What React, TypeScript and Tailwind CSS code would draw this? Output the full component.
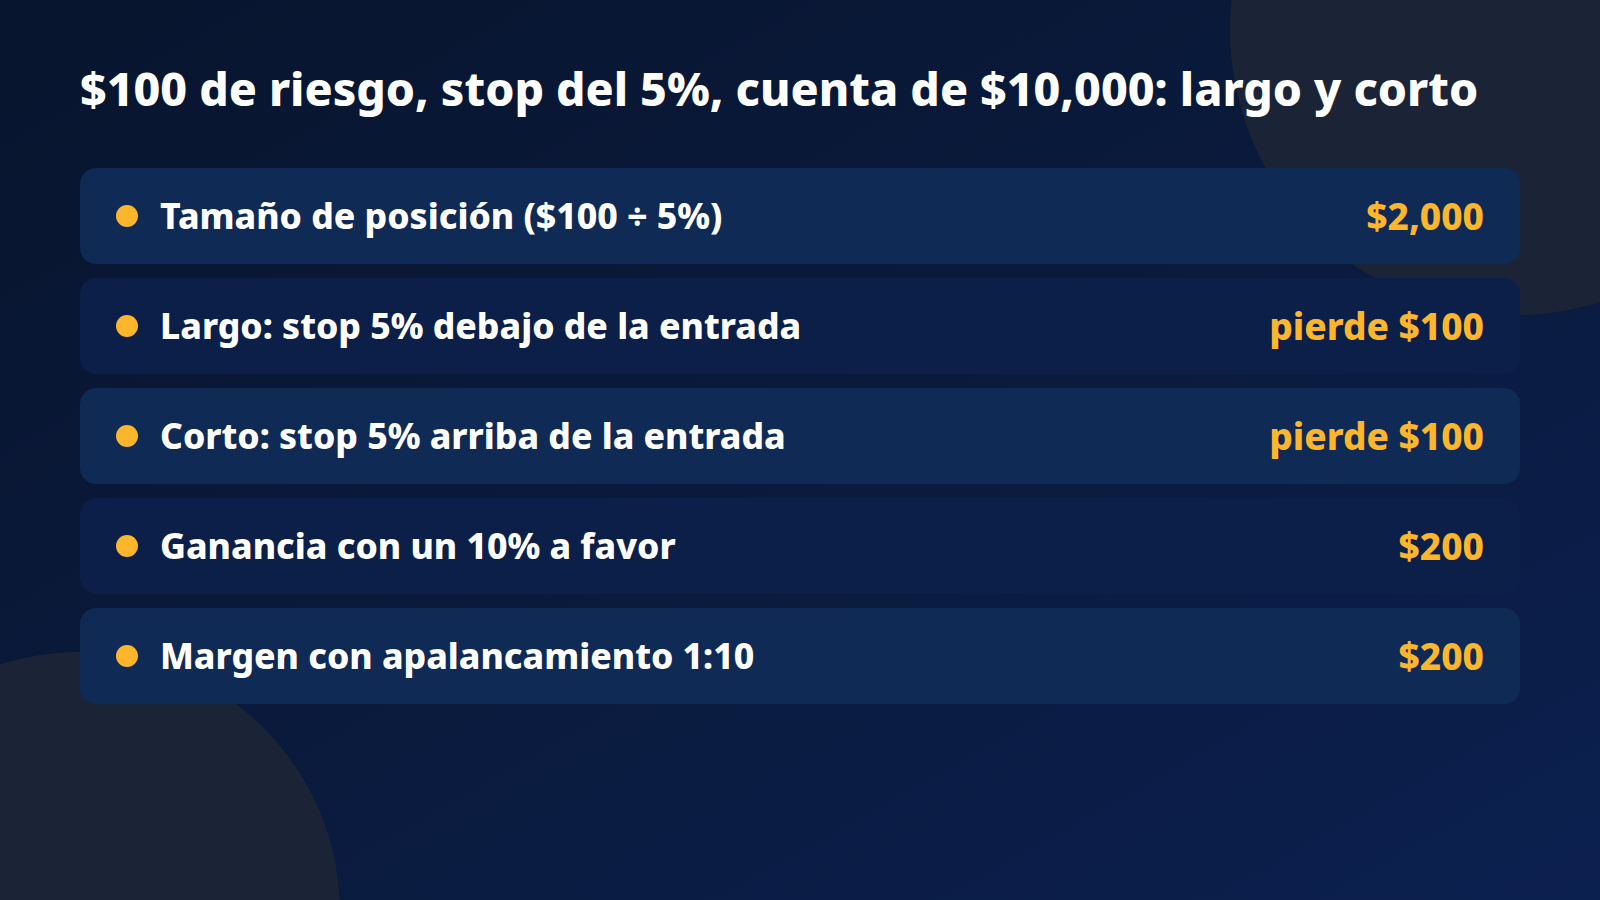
import React from 'react';

type Row = { label: string; value: string };

const rows: Row[] = [
  { label: 'Tamaño de posición ($100 ÷ 5%)', value: '$2,000' },
  { label: 'Largo: stop 5% debajo de la entrada', value: 'pierde $100' },
  { label: 'Corto: stop 5% arriba de la entrada', value: 'pierde $100' },
  { label: 'Ganancia con un 10% a favor', value: '$200' },
  { label: 'Margen con apalancamiento 1:10', value: '$200' },
];

const App: React.FC = () => {
  return (
    <div
      className="relative w-[1600px] h-[900px] overflow-hidden bg-gradient-to-br from-[#08152e] via-[#0a1a3c] to-[#0c2050]"
      style={{ fontFamily: '"Noto Sans", "Open Sans", sans-serif' }}
    >
      {/* decorative circles */}
      <div className="absolute left-[1230px] top-[-255px] w-[570px] h-[570px] rounded-full bg-[#1a2436]" />
      <div className="absolute left-[-180px] top-[652px] w-[520px] h-[520px] rounded-full bg-[#1a2436]" />

      <div className="relative flex flex-col px-20 pt-[58px]">
        <h1 className="text-[46.4px] leading-[60px] font-extrabold text-white">
          $100 de riesgo, stop del 5%, cuenta de $10,000: largo y corto
        </h1>

        <div className="mt-[50px] flex flex-col gap-[14px]">
          {rows.map((row, i) => (
            <div
              key={i}
              className={
                'h-[96px] rounded-2xl flex items-center justify-between px-9 ' +
                (i % 2 === 0 ? 'bg-[#0f2a55]' : 'bg-[#0c1f49]')
              }
            >
              <div className="flex items-center gap-[22px]">
                <span className="w-[22px] h-[22px] rounded-full bg-[#fbb62c]" />
                <span className="text-[35.5px] font-extrabold text-white leading-none">
                  {row.label}
                </span>
              </div>
              <span className="text-[37px] font-extrabold text-[#fbb62c] leading-none -translate-y-px">
                {row.value}
              </span>
            </div>
          ))}
        </div>
      </div>
    </div>
  );
};

export default App;
